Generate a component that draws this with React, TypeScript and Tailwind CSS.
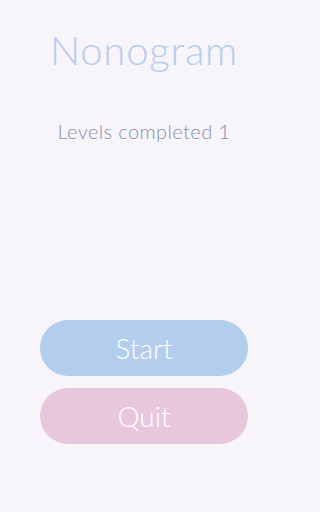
export default function App() {
  return (
    <div className="min-h-screen w-full bg-[#f7f4fa]">
      <div className="w-[288px] flex flex-col items-center font-['Lato',sans-serif]">
        <h1 className="mt-[26px] text-[40px] leading-[48px] font-light tracking-[0.8px] text-[#b4cdf0]">
          Nonogram
        </h1>
        <p className="mt-[45px] text-[20px] leading-[24px] font-light tracking-[0.4px] text-[#8a8fa8]">
          Levels completed 1
        </p>
        <div className="mt-[177px] flex flex-col gap-3 w-[208px]">
          <button className="h-[56px] rounded-full bg-[#b3cded] text-white text-[28px] font-light">
            Start
          </button>
          <button className="h-[56px] rounded-full bg-[#e8c7dd] text-white text-[28px] font-light">
            Quit
          </button>
        </div>
      </div>
    </div>
  );
}
